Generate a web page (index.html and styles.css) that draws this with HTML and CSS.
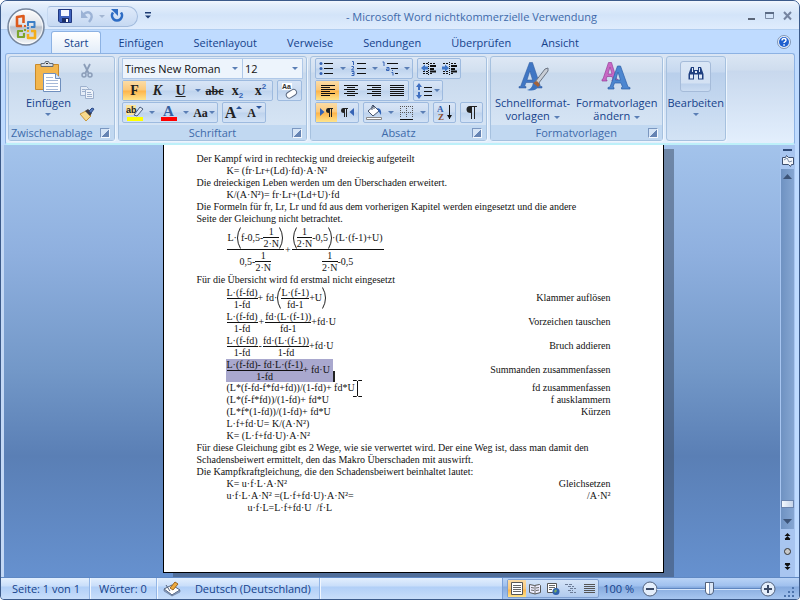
FILE: index.html
```html
<!DOCTYPE html>
<html lang="de">
<head>
    <meta charset="UTF-8">
    <meta name="viewport" content="width=device-width, initial-scale=1.0">
    <title>Microsoft Word nichtkommerzielle Verwendung</title>
    <link rel="stylesheet" href="styles.css">
</head>
<body>

<div class="window">
    <header class="titlebar">
        <button class="office-button" aria-label="Office">
            <svg width="40" height="40" viewBox="0 0 40 40">
                <defs>
                    <linearGradient id="orb" x1="0" y1="0" x2="0" y2="1">
                        <stop offset="0" stop-color="#fdfdfd"/>
                        <stop offset=".45" stop-color="#dfe3e9"/>
                        <stop offset=".5" stop-color="#b9c1cc"/>
                        <stop offset="1" stop-color="#f6f8fa"/>
                    </linearGradient>
                </defs>
                <circle cx="20" cy="20" r="18" fill="url(#orb)" stroke="#76869d" stroke-width="1.5"/>
                <circle cx="20" cy="20" r="16.5" fill="none" stroke="#fff" opacity=".7"/>
                <g fill="none" stroke-width="2.6" stroke-linejoin="round">
                    <path d="M16 19h-5v-9l6.500-1v7" stroke="#dd5a1c"/>
                    <path d="M22 19v-4h6.500v5h-3.500" stroke="#3d7fc6" stroke-width="2"/>
                    <path d="M17 24h-5v6h6v-4" stroke="#7ba52c" stroke-width="2.200"/>
                    <path d="M22 27v4h7v-7h-4" stroke="#f3ad1b"/>
                </g>
                <path d="M18 18h2v2h-2z" fill="#dd5a1c"/>
                <path d="M21 20h2v2h-2z" fill="#3d7fc6"/>
                <path d="M18 22h2v2h-2z" fill="#7ba52c"/>
                <path d="M21 23h2v2h-2z" fill="#f3ad1b"/>
            </svg>
        </button>
        <div class="quick-access">
            <button aria-label="Speichern">
                <svg width="16" height="16" viewBox="0 0 16 16">
                    <path d="M1.500 1.500h13v13h-11.500l-1.500-1.500z" fill="#3f62bd" stroke="#20377f"/>
                    <path d="M4 2h8v6h-8z" fill="#f4f8ff"/>
                    <path d="M5 10h7v4h-7z" fill="#1d2f66"/>
                    <path d="M9 11h2v3h-2z" fill="#fff"/>
                </svg>
            </button>
            <button aria-label="Rückgängig">
                <svg width="16" height="16" viewBox="0 0 16 16">
                    <path d="M4 7q4-4 7-2q4 3-1 9" fill="none" stroke="#9cb3d6" stroke-width="2.400"/>
                    <path d="M2 2v8h7z" fill="#9cb3d6"/>
                </svg>
            </button>
            <span class="caret faded"></span>
            <button aria-label="Wiederholen">
                <svg width="16" height="16" viewBox="0 0 16 16">
                    <path d="M4 4.500a5 5 0 1 0 8 0" fill="none" stroke="#2d6cc4" stroke-width="2.600"/>
                    <path d="M2 1h7v7z" fill="#2d6cc4"/>
                </svg>
            </button>
        </div>
        <button class="customize" aria-label="Symbolleiste anpassen">
            <svg width="8" height="8" viewBox="0 0 8 8"><path d="M1 0h6v1.500h-6zM1 3.500h6l-3 3z" fill="#1e3c74"/></svg>
        </button>
        <h1>- Microsoft Word nichtkommerzielle Verwendung</h1>
        <div class="window-buttons">
            <button aria-label="Minimieren"><svg width="10" height="10" viewBox="0 0 10 10"><path d="M1 7h7v2h-7z" fill="#5b6678"/></svg></button>
            <button aria-label="Maximieren"><svg width="10" height="10" viewBox="0 0 10 10"><path d="M.5 1.500h8v6h-8z" fill="none" stroke="#7b8ba5"/><path d="M0 1h9v2h-9z" fill="#5b6b85"/></svg></button>
            <button aria-label="Schließen"><svg width="10" height="10" viewBox="0 0 10 10"><path d="M1 1l7 7.500M8 1l-7 7.500" stroke="#7584a0" stroke-width="2"/></svg></button>
        </div>
    </header>

    <nav class="tabs">
        <button class="tab active">Start</button>
        <button class="tab">Einfügen</button>
        <button class="tab">Seitenlayout</button>
        <button class="tab">Verweise</button>
        <button class="tab">Sendungen</button>
        <button class="tab">Überprüfen</button>
        <button class="tab">Ansicht</button>
        <button class="help" aria-label="Hilfe">
            <svg width="14" height="14" viewBox="0 0 14 14">
                <circle cx="7" cy="7" r="6.500" fill="#e8f0fb" stroke="#7f95b5"/>
                <circle cx="7" cy="7" r="5" fill="#1e5fcf"/>
                <path d="M5 5.500q0-2 2-2t2 1.700q0 1-1.200 1.600q-.8.400-.8 1.200" fill="none" stroke="#fff" stroke-width="1.400"/>
                <path d="M6.300 9.200h1.500v1.500h-1.500z" fill="#fff"/>
            </svg>
        </button>
    </nav>

    <div class="ribbon">
        <section class="group clipboard">
            <div class="group-body">
                <button class="big">
                    <svg width="28" height="32" viewBox="0 0 28 32">
                        <path d="M1.500 3.500h23v25h-23z" fill="#f3b64d" stroke="#c98a2b"/>
                        <path d="M7 5.500v-3h3.500l1-2h3l1 2h3.500v3z" fill="#d9dde2" stroke="#5f6a78"/>
                        <path d="M12 2.500h2" stroke="#333"/>
                        <path d="M9.500 12.500h12l5 5v13h-17z" fill="#fff" stroke="#6f8fbd"/>
                        <path d="M21.500 12.500v5h5" fill="#d6e4f6" stroke="#6f8fbd"/>
                        <path d="M12 16.500h7M12 19.500h12M12 22.500h12M12 25.500h12M12 28.500h12" stroke="#a5b9d8"/>
                    </svg>
                    <span>Einfügen</span>
                    <span class="caret"></span>
                </button>
                <div class="small-tools">
                    <button aria-label="Ausschneiden">
                        <svg width="16" height="16" viewBox="0 0 16 16">
                            <path d="M5 1l4.500 9M11 1l-4.500 9" stroke="#8b9db8" stroke-width="1.800"/>
                            <circle cx="5" cy="12" r="2" fill="none" stroke="#8b9db8" stroke-width="1.500"/>
                            <circle cx="11" cy="12" r="2" fill="none" stroke="#8b9db8" stroke-width="1.500"/>
                        </svg>
                    </button>
                    <button aria-label="Kopieren">
                        <svg width="16" height="16" viewBox="0 0 16 16">
                            <path d="M1.500 2.500h6l2 2v7h-8z" fill="#e4ecf7" stroke="#9db0cd"/>
                            <path d="M6.500 5.500h6l2 2v7h-8z" fill="#eef3fa" stroke="#9db0cd"/>
                            <path d="M3 5.500h3M3 7.500h3M8 8.500h4M8 10.500h5M8 12.500h5" stroke="#9db0cd"/>
                        </svg>
                    </button>
                    <button aria-label="Format übertragen">
                        <svg width="16" height="16" viewBox="0 0 16 16">
                            <path d="M1 8l6-3 5 5-5 5z" fill="#f7d98c" stroke="#c9983b"/>
                            <path d="M6 5l3-2 4 4-2 3z" fill="#3d3d48"/>
                            <path d="M10 5l3-3 2 1-3 4z" fill="#5379bd" stroke="#2c4a86"/>
                        </svg>
                    </button>
                </div>
            </div>
            <footer>Zwischenablage<span class="launcher"></span></footer>
        </section>

        <section class="group font">
            <div class="group-body rows">
                <div class="row combos">
                    <label class="combo family"><select aria-label="Schriftart"><option>Times New Roman</option></select></label>
                    <label class="combo size"><select aria-label="Schriftgrad"><option>12</option></select></label>
                </div>
                <div class="row">
                    <div class="tools">
                        <button class="tool wide glyph on"><b>F</b></button>
                        <button class="tool wide glyph"><b><i>K</i></b></button>
                        <button class="tool wide glyph"><b><u>U</u></b></button>
                        <button class="drop" aria-label="Unterstreichungsart"><span class="caret"></span></button>
                        <button class="tool wide glyph strike"><s>abc</s></button>
                        <button class="tool wide glyph"><b>x</b><sub>2</sub></button>
                        <button class="tool wide glyph"><b>x</b><sup>2</sup></button>
                    </div>
                    <div class="tools">
                        <button class="tool wide" aria-label="Formatierung löschen">
                            <svg width="18" height="18" viewBox="0 0 18 18">
                                <path d="M1 1h10v7h-10z" fill="#fff"/>
                                <text x="1" y="7" class="tiny">Aa</text>
                                <rect x="5" y="9" width="11" height="6" rx="3" transform="rotate(-32 10 12)" fill="#fff" stroke="#5d6b82"/>
                            </svg>
                        </button>
                    </div>
                </div>
                <div class="row">
                    <div class="tools">
                        <button class="tool wide" aria-label="Texthervorhebungsfarbe">
                            <svg width="18" height="17" viewBox="0 0 18 17">
                                <path d="M0 1h10v10h-10z" fill="#fbe49a"/>
                                <text x="0" y="9" class="mini">ab</text>
                                <path d="M8 11l6-8 3 2-6 7z" fill="#dfe8f4" stroke="#4c5e7c"/>
                                <path d="M1 13h16v4h-16z" fill="#ff0"/>
                            </svg>
                        </button>
                        <button class="drop" aria-label="Hervorhebung wählen"><span class="caret"></span></button>
                        <button class="tool wide" aria-label="Schriftfarbe">
                            <svg width="18" height="17" viewBox="0 0 18 17">
                                <text x="3" y="12" class="font-color">A</text>
                                <path d="M1 13h16v4h-16z" fill="#f00"/>
                            </svg>
                        </button>
                        <button class="drop" aria-label="Farbe wählen"><span class="caret"></span></button>
                        <button class="tool case glyph">Aa<span class="caret"></span></button>
                    </div>
                    <div class="tools">
                        <button class="tool glyph grow">A<span class="up"></span></button>
                        <button class="tool glyph shrink">A<span class="caret dark"></span></button>
                    </div>
                </div>
            </div>
            <footer>Schriftart<span class="launcher"></span></footer>
        </section>

        <section class="group paragraph">
            <div class="group-body rows">
                <div class="row">
                    <div class="tools">
                        <button class="tool" aria-label="Aufzählungszeichen">
                            <svg width="15" height="15" viewBox="0 0 15 15">
                                <path d="M5 2.500h9M5 7.500h9M5 12.500h9" stroke="#111"/>
                                <g fill="#3563b5"><circle cx="2" cy="2.500" r="1.500"/><circle cx="2" cy="7.500" r="1.500"/><circle cx="2" cy="12.500" r="1.500"/></g>
                            </svg>
                        </button>
                        <button class="drop" aria-label="Aufzählung wählen"><span class="caret"></span></button>
                        <button class="tool" aria-label="Nummerierung">
                            <svg width="15" height="15" viewBox="0 0 15 15">
                                <path d="M6 2.500h9M6 7.500h9M6 12.500h9" stroke="#111"/>
                                <path d="M1 .5h1.500v3.500M.5 5.500h2v1.500l-2 2h2.500M.5 10.500h2.500v4h-2.500M1 12.500h2" fill="none" stroke="#3563b5"/>
                            </svg>
                        </button>
                        <button class="drop" aria-label="Nummerierung wählen"><span class="caret"></span></button>
                        <button class="tool" aria-label="Liste mit mehreren Ebenen">
                            <svg width="17" height="15" viewBox="0 0 17 15">
                                <path d="M5 2.500h11M9 7.500h7M13 12.500h3" stroke="#111"/>
                                <path d="M.5 1h1.500v4M4.500 6.500h2.500v3h-2.500v-1.500h2M10.500 9v1M9.500 11.500h1.500v3" fill="none" stroke="#3563b5"/>
                            </svg>
                        </button>
                        <button class="drop" aria-label="Liste wählen"><span class="caret"></span></button>
                    </div>
                    <div class="tools">
                        <button class="tool" aria-label="Einzug verkleinern">
                            <svg width="16" height="16" viewBox="0 0 16 16">
                                <path d="M2 2.500h5M9 2.500h6M9 12.500h3M2 12.500h5M2 10.500h5" stroke="#111" stroke-dasharray="2 1"/>
                                <path d="M9 5h6M9 8h4M9 10.500h6" stroke="#111" stroke-width="2"/>
                                <path d="M7.500 1v14" stroke="#111" stroke-dasharray="1 1"/>
                                <path d="M0 7l4-3.500v2h3v3h-3v2z" fill="#3f76c8"/>
                            </svg>
                        </button>
                        <button class="tool" aria-label="Einzug vergrößern">
                            <svg width="16" height="16" viewBox="0 0 16 16">
                                <path d="M1 2.500h6M9 2.500h6M9 12.500h3M1 12.500h6M1 10.500h6" stroke="#111" stroke-dasharray="2 1"/>
                                <path d="M9 5h6M9 8h4M9 10.500h6" stroke="#111" stroke-width="2"/>
                                <path d="M7.500 1v14" stroke="#111" stroke-dasharray="1 1"/>
                                <path d="M7 7l-4-3.500v2h-3v3h3v2z" fill="#3f76c8"/>
                            </svg>
                        </button>
                    </div>
                </div>
                <div class="row">
                    <div class="tools">
                        <button class="tool wide on" aria-label="Linksbündig"><svg width="14" height="11" viewBox="0 0 14 11"><path d="M0 .5h14M0 2.500h9M0 4.500h14M0 6.500h9M0 8.500h14M0 10.500h9" stroke="#111"/></svg></button>
                        <button class="tool wide" aria-label="Zentriert"><svg width="14" height="11" viewBox="0 0 14 11"><path d="M0 .5h14M3 2.500h8M0 4.500h14M3 6.500h8M0 8.500h14M3 10.500h8" stroke="#111"/></svg></button>
                        <button class="tool wide" aria-label="Rechtsbündig"><svg width="14" height="11" viewBox="0 0 14 11"><path d="M0 .5h14M5 2.500h9M0 4.500h14M5 6.500h9M0 8.500h14M5 10.500h9" stroke="#111"/></svg></button>
                        <button class="tool wide" aria-label="Blocksatz"><svg width="14" height="11" viewBox="0 0 14 11"><path d="M0 .5h14M0 2.500h14M0 4.500h14M0 6.500h14M0 8.500h14M0 10.500h14" stroke="#111"/></svg></button>
                    </div>
                    <div class="tools">
                        <button class="tool spacing" aria-label="Zeilenabstand">
                            <svg width="16" height="16" viewBox="0 0 16 16">
                                <path d="M3 0l3 4h-2v3h-2v-3h-2zM3 16l3-4h-2v-3h-2v3h-2z" fill="#3f6fc0"/>
                                <path d="M8 4.500h8M8 8.500h8M8 12.500h8" stroke="#111"/>
                            </svg>
                            <span class="caret"></span>
                        </button>
                    </div>
                </div>
                <div class="row">
                    <div class="tools">
                        <button class="tool on" aria-label="Von links nach rechts">
                            <svg width="13" height="9" viewBox="0 0 13 9"><path d="M0 0l4.500 4-4.500 4z" fill="#3563b5"/><path d="M8 0h5v1h-1v8h-1v-8h-1v8h-1v-4q-3 0-3-2.500t2-2.500z" fill="#222"/></svg>
                        </button>
                        <button class="tool" aria-label="Von rechts nach links">
                            <svg width="13" height="9" viewBox="0 0 13 9"><path d="M13 0l-4.500 4 4.500 4z" fill="#3563b5"/><path d="M2 0h5v1h-1v8h-1v-8h-1v8h-1v-4q-3 0-3-2.500t2-2.500z" fill="#222"/></svg>
                        </button>
                    </div>
                    <div class="tools">
                        <button class="tool" aria-label="Schattierung">
                            <svg width="17" height="17" viewBox="0 0 17 17">
                                <path d="M2 7l6-5 5 5-6 5z" fill="#fff" stroke="#44526a"/>
                                <path d="M6 6v-4q1-2 2 0v3" fill="none" stroke="#44526a"/>
                                <path d="M11 4q5 0 4 7l-2-3z" fill="#2e62b5"/>
                                <path d="M.5 13.500h15v2h-15z" fill="#fff" stroke="#888"/>
                            </svg>
                        </button>
                        <button class="drop" aria-label="Schattierung wählen"><span class="caret"></span></button>
                        <button class="tool" aria-label="Rahmenlinie">
                            <svg width="13" height="14" viewBox="0 0 13 14">
                                <path d="M0 .5h13M0 6.500h13M.5 0v12M6.500 0v12M12.500 0v12" stroke="#555" stroke-dasharray="1 1"/>
                                <path d="M0 13.500h13" stroke="#111"/>
                            </svg>
                        </button>
                        <button class="drop" aria-label="Rahmen wählen"><span class="caret"></span></button>
                    </div>
                    <div class="tools">
                        <button class="tool" aria-label="Sortieren">
                            <svg width="16" height="17" viewBox="0 0 16 17">
                                <text x="0" y="8" class="sort-a">A</text>
                                <text x="1" y="16" class="sort-z">Z</text>
                                <path d="M12.500 1v14" stroke="#111"/>
                                <path d="M10 11h5l-2.500 4z" fill="#111"/>
                            </svg>
                        </button>
                    </div>
                    <div class="tools">
                        <button class="tool" aria-label="Alle anzeigen">
                            <svg width="11" height="13" viewBox="0 0 11 13"><path d="M4 0h7v1h-2v12h-1v-12h-2v12h-1v-6q-4.500 0-4.500-3.500t3.500-3.500z" fill="#222"/></svg>
                        </button>
                    </div>
                </div>
            </div>
            <footer>Absatz<span class="launcher"></span></footer>
        </section>

        <section class="group styles">
            <div class="group-body">
                <button class="big">
                    <svg width="32" height="32" viewBox="0 0 32 32">
                        <path d="M2 27h7v-1.500h-1.500l1.500-4h7l1.500 4h-1.500v1.500h9v-1.500h-1.500l-8-24h-3l-9 24h-1.500zM10 19l2.800-9 2.800 9z" fill="#3f76c4" stroke="#2c5799" stroke-width=".5"/>
                        <path d="M18 21l10-13 3-1v3l-10 13z" fill="#c9ced6" stroke="#6b7482"/>
                        <path d="M16 22l4-2 3 4-3 3z" fill="#a3623a"/>
                        <path d="M10 29q5-1 6-7l5 4q-3 5-11 3z" fill="#3b72bd"/>
                    </svg>
                    <span>Schnellformat-<br>vorlagen <i class="caret"></i></span>
                </button>
                <button class="big">
                    <svg width="32" height="32" viewBox="0 0 32 32">
                        <path d="M1 20h5v-1l-1-.5 1-3h5l1 3-1 .5v1h6v-1.500l-1.500-.5-5-16.500h-3l-5.500 16.500-1 .5zM7 13l2-7 2 7z" fill="#c868c4" stroke="#96429a" stroke-width=".7"/>
                        <path d="M7 28h6v-1.500l-1-.5 1.500-4h6.500l1.500 4-1 .5v1.500h8.500v-1.500l-2-.5-7.500-21h-3l-7.500 21-2 .5zM14.500 19l2.500-8 2.500 8z" fill="#4c86d0" stroke="#2c5fa8" stroke-width=".7"/>
                    </svg>
                    <span>Formatvorlagen<br>ändern <i class="caret"></i></span>
                </button>
            </div>
            <footer>Formatvorlagen<span class="launcher"></span></footer>
        </section>

        <section class="group editing">
            <button class="big">
                <span class="tile">
                    <svg width="16" height="14" viewBox="0 0 16 14">
                        <path d="M3 1h3v3h4v-3h3l2.500 7v5.500h-5.500v-5h-4v5h-5.500v-5.500z" fill="#1f3f80"/>
                        <path d="M2 8.500h3v4h-3zM11 8.500h3v4h-3zM4 2h1v4h-1zM11 2h1v4h-1zM7 5h2v2h-2z" fill="#dfe9f8"/>
                    </svg>
                </span>
                <span>Bearbeiten</span>
                <span class="caret"></span>
            </button>
        </section>
    </div>

    <div class="workspace">
        <main class="desk">
            <article class="page">
                <p>Der Kampf wird in rechteckig und dreieckig aufgeteilt</p>
                <p class="indent">K= (fr·Lr+(Ld)·fd)·A·N²</p>
                <p>Die dreieckigen Leben werden um den Überschaden erweitert.</p>
                <p class="indent">K/(A·N²)= fr·Lr+(Ld+U)·fd</p>
                <p>Die Formeln für fr, Lr, Lr und fd aus dem vorherigen Kapitel werden eingesetzt und die andere<br>Seite der Gleichung nicht betrachtet.</p>
                <div class="equation tall">
                    <span class="frac">
                        <span class="term">L·<svg class="paren" viewBox="0 0 4 22"><path d="M3.500 .5q-6 10.500 0 21"/></svg>f-0,5-<span class="frac"><span>1</span><span>2·N</span></span><svg class="paren" viewBox="0 0 4 22"><path d="M.5 .5q6 10.500 0 21"/></svg></span>
                        <span class="term">0,5-<span class="frac"><span>1</span><span>2·N</span></span></span>
                    </span>
                    <span class="operator">+</span>
                    <span class="frac">
                        <span class="term"><svg class="paren" viewBox="0 0 4 22"><path d="M3.500 .5q-6 10.500 0 21"/></svg><span class="frac"><span>1</span><span>2·N</span></span>-0,5<svg class="paren" viewBox="0 0 4 22"><path d="M.5 .5q6 10.500 0 21"/></svg>·(L·(f-1)+U)</span>
                        <span class="term"><span class="frac"><span>1</span><span>2·N</span></span>-0,5</span>
                    </span>
                </div>
                <p>Für die Übersicht wird fd erstmal nicht eingesetzt</p>
                <div class="equation">
                    <span class="frac"><span>L·(f-fd)</span><span>1-fd</span></span>
                    <span>+ fd·</span>
                    <svg class="paren" viewBox="0 0 4 22"><path d="M3.500 .5q-6 10.500 0 21"/></svg>
                    <span class="frac"><span>L·(f-1)</span><span>fd-1</span></span>
                    <span>+U</span>
                    <svg class="paren" viewBox="0 0 4 22"><path d="M.5 .5q6 10.500 0 21"/></svg>
                    <span class="note">Klammer auflösen</span>
                </div>
                <div class="equation">
                    <span class="frac"><span>L·(f-fd)</span><span>1-fd</span></span>
                    <span class="operator">+</span>
                    <span class="frac"><span>fd·(L·(f-1))</span><span>fd-1</span></span>
                    <span>+fd·U</span>
                    <span class="note">Vorzeichen tauschen</span>
                </div>
                <div class="equation">
                    <span class="frac"><span>L·(f-fd)</span><span>1-fd</span></span>
                    <span class="operator">-</span>
                    <span class="frac"><span>fd·(L·(f-1))</span><span>1-fd</span></span>
                    <span>+fd·U</span>
                    <span class="note">Bruch addieren</span>
                </div>
                <div class="equation">
                    <span class="selected"><span class="frac"><span>L·(f-fd)- fd·L·(f-1)</span><span>1-fd</span></span>+ fd·U</span>
                    <span class="text-caret"></span>
                    <span class="note">Summanden zusammenfassen</span>
                </div>
                <p class="indent split"><span class="pointer-line">(L*(f-fd-f*fd+fd))/(1-fd)+ fd*U<svg class="pointer" width="9" height="17" viewBox="0 0 9 17"><path d="M0 .5h3.500l1 1 1-1h3.500M0 16.500h3.500l1-1 1 1h3.500M4.500 1v15" fill="none" stroke="#111"/></svg></span><span>fd zusammenfassen</span></p>
                <p class="indent split"><span>(L*(f-f*fd))/(1-fd)+ fd*U</span><span>f ausklammern</span></p>
                <p class="indent split"><span>(L*f*(1-fd))/(1-fd)+ fd*U</span><span>Kürzen</span></p>
                <p class="indent">L·f+fd·U= K/(A·N²)</p>
                <p class="indent">K= (L·f+fd·U)·A·N²</p>
                <p>Für diese Gleichung gibt es 2 Wege, wie sie verwertet wird. Der eine Weg ist, dass man damit den<br>Schadensbeiwert ermittelt, den das Makro Überschaden mit auswirft.</p>
                <p>Die Kampfkraftgleichung, die den Schadensbeiwert beinhaltet lautet:</p>
                <p class="indent split"><span>K= u·f·L·A·N²</span><span>Gleichsetzen</span></p>
                <p class="indent split"><span>u·f·L·A·N² =(L·f+fd·U)·A·N²=</span><span>/A·N²</span></p>
                <p class="indent deeper">u·f·L=L·f+fd·U&nbsp; /f·L</p>
            </article>
        </main>
        <aside class="scroll-column">
            <span class="splitter"></span>
            <button class="ruler-toggle" aria-label="Lineal">
                <svg width="12" height="12" viewBox="0 0 12 12"><path d="M.5 2.500h3l1-2 2 2h5v7h-2l-1 2-2-2h-6z" fill="#f2f5fa" stroke="#3d4f70"/><path d="M2 5l3-2 2 4 3-1" fill="none" stroke="#8090aa"/></svg>
            </button>
            <div class="track">
                <button aria-label="Nach oben"><svg width="9" height="5" viewBox="0 0 9 5"><path d="M4.500 0l4.500 5h-9z" fill="#3d5478"/></svg></button>
                <span class="thumb"></span>
                <button aria-label="Nach unten"><svg width="9" height="5" viewBox="0 0 9 5"><path d="M0 0h9l-4.500 5z" fill="#3d5478"/></svg></button>
            </div>
            <button class="browse" aria-label="Vorherige Seite"><svg width="7" height="7" viewBox="0 0 7 7"><path d="M3.500 0l3 3h-6zM3.500 3l3 3h-6zM1 6h5v1h-5z" fill="#111"/></svg></button>
            <button class="browse" aria-label="Browseobjekt"><svg width="7" height="7" viewBox="0 0 7 7"><circle cx="3.500" cy="3.500" r="3" fill="#c9c9c9" stroke="#333"/></svg></button>
            <button class="browse" aria-label="Nächste Seite"><svg width="7" height="7" viewBox="0 0 7 7"><path d="M3.500 7l3-3h-6zM3.500 4l3-3h-6zM1 0h5v1h-5z" fill="#111"/></svg></button>
        </aside>
    </div>

    <footer class="statusbar">
        <span class="cell">Seite: 1 von 1</span>
        <span class="cell">Wörter: 0</span>
        <span class="cell proof">
            <svg width="18" height="16" viewBox="0 0 18 16">
                <path d="M1 8l8-4 8 5-8 5z" fill="#fff" stroke="#51617c"/>
                <path d="M1 8v2l8 5 8-4v-2l-8 5z" fill="#8ea3c6" stroke="#51617c" stroke-width=".5"/>
                <path d="M3 4l4 6" stroke="#51617c"/>
                <path d="M7 7l5-6 3 2-5 6z" fill="#edaa3e" stroke="#9a6420"/>
            </svg>
            Deutsch (Deutschland)
        </span>
        <div class="view-zone">
            <div class="views">
                <button class="on" aria-label="Seitenlayout"><svg width="12" height="13" viewBox="0 0 12 13"><path d="M.5 .5h11v12h-11z" fill="#fff" stroke="#555"/><path d="M2 3.500h8M2 5.500h8M2 7.500h8M2 9.500h8" stroke="#666"/></svg></button>
                <button aria-label="Vollbild-Lesemodus"><svg width="12" height="12" viewBox="0 0 12 12"><path d="M.5 1.500l5 1 5-1 1 1v7l-5.500 1.500-5.500-1.500z" fill="#eef" stroke="#555"/><path d="M6 2v9M2 4.500l3 .5M2 7l3 .5M7 5l3-.5M7 7.500l3-.5" stroke="#666"/></svg></button>
                <button aria-label="Weblayout"><svg width="13" height="12" viewBox="0 0 13 12"><path d="M.5 .5h9v9h-9z" fill="#fff" stroke="#555"/><path d="M2 2.500h6M2 4.500h6M2 6.500h3" stroke="#666"/><circle cx="9" cy="8.500" r="3.500" fill="#2f61ad"/><path d="M7 8l2-2 1 2-2 2z" fill="#79ad62"/></svg></button>
                <button aria-label="Gliederung"><svg width="12" height="12" viewBox="0 0 12 12"><path d="M0 1.500h7M3 3.500h6M5 5.500h6M3 7.500h5M5 9.500h6" stroke="#6b7b96" stroke-dasharray="3 1"/></svg></button>
                <button aria-label="Entwurf"><svg width="11" height="12" viewBox="0 0 11 12"><path d="M0 1.500h11M0 3.500h11M0 5.500h11M0 7.500h11M0 9.500h11" stroke="#555"/></svg></button>
            </div>
            <span class="percent">100 %</span>
            <button class="zoom-step" aria-label="Verkleinern"><svg width="16" height="16" viewBox="0 0 16 16"><circle cx="8" cy="8" r="7" fill="#e4eefb" stroke="#51617c"/><path d="M4 8h8" stroke="#3b4a66" stroke-width="2"/></svg></button>
            <input type="range" min="0" max="100" value="50" aria-label="Zoom">
            <button class="zoom-step" aria-label="Vergrößern"><svg width="16" height="16" viewBox="0 0 16 16"><circle cx="8" cy="8" r="7" fill="#e4eefb" stroke="#51617c"/><path d="M4 8h8M8 4v8" stroke="#3b4a66" stroke-width="2"/></svg></button>
            <svg class="grip" width="11" height="11" viewBox="0 0 11 11"><path d="M8 0h2v2h-2zM4 4h2v2h-2zM8 4h2v2h-2zM0 8h2v2h-2zM4 8h2v2h-2zM8 8h2v2h-2z" fill="#4d74ad"/></svg>
        </div>
    </footer>
</div>

</body>
</html>
```
FILE: styles.css
```css
* {
    box-sizing: border-box;
}
body {
    margin: 0;
    background-color: #fff;
    font-family: "Open Sans", "Noto Sans", sans-serif;
    font-size: 11px;
    color: #15428b;
}
button {
    display: flex;
    justify-content: center;
    align-items: center;
    padding: 0;
    border: none;
    background: none;
    font: inherit;
    color: inherit;
}
svg {
    display: block;
    flex: none;
}
.window {
    position: relative;
    display: flex;
    flex-direction: column;
    height: 100vh;
    border: 1px solid #3b5a8a;
    border-radius: 7px 7px 4px 4px;
    background-color: #bfdbff;
    overflow: hidden;
}

/* title bar */
.titlebar {
    display: flex;
    align-items: center;
    height: 29px;
    padding: 2px 6px 0 46px;
    border-bottom: 1px solid #b0cdf0;
    background: linear-gradient(#f2f7fe 0, #e3eefb 4px, #d3e4f9 14px, #dfecfd 100%);
}
.office-button {
    position: absolute;
    top: 6px;
    left: 5px;
}
.quick-access {
    display: flex;
    align-items: center;
    gap: 6px;
    height: 21px;
    width: 91px;
    padding-left: 9px;
    border: 1px solid #a2bbdd;
    border-left-color: #c5d8f0;
    border-radius: 4px 11px 11px 4px;
    background: linear-gradient(#dfeafa, #c6d9f2);
}
.customize {
    margin-left: 6px;
}
h1 {
    flex: 1;
    margin: 0;
    padding: 0 34px 0 78px;
    font-size: 11px;
    font-weight: normal;
    text-align: center;
    color: #3e6aaa;
    white-space: nowrap;
}
.window-buttons {
    display: flex;
    gap: 8px;
}
.caret {
    display: inline-block;
    border: 3px solid transparent;
    border-top-color: #5a7eb5;
    border-bottom: none;
}
.caret.faded {
    margin: 0 -2px;
    border-top-color: #a3b6d2;
}

/* tabs */
.tabs {
    display: flex;
    align-items: stretch;
    height: 23px;
    padding: 1px 8px 0 48px;
}
.tab {
    margin: 0 2px;
    padding: 0 12px;
    border: 1px solid transparent;
    border-bottom: none;
}
.tab.active {
    border-color: #8db2e3;
    border-radius: 3px 3px 0 0;
    background: linear-gradient(#fff, #e3edf9);
}
.help {
    margin-left: auto;
}

/* ribbon */
.ribbon {
    display: flex;
    gap: 3px;
    margin: 0 4px;
    padding: 2px;
    border: 1px solid #8db2e3;
    border-bottom: 2px solid #bdf0f9;
    border-radius: 3px;
    background: linear-gradient(#dbe6f4 0, #cfddee 16px, #c8d8ed 17px, #e3effd 100%);
}
.group {
    display: flex;
    flex-direction: column;
    height: 85px;
    border: 1px solid #a6c1df;
    border-radius: 3px;
    background: linear-gradient(#dee8f5 0, #d1dfef 15px, #c8d9ed 16px, #d9e7f6 100%);
    box-shadow: 1px 1px 0 #edf5fd;
}
.group footer {
    display: flex;
    justify-content: center;
    align-items: center;
    height: 15px;
    padding: 0 4px;
    background-color: #c1d8f1;
    color: #3e6aaa;
    line-height: 15px;
}
.group footer::before {
    content: "";
    flex: 1;
}
.launcher {
    flex: 1;
    display: flex;
    justify-content: flex-end;
}
.launcher::after {
    content: "";
    width: 8px;
    height: 8px;
    border: 1px solid #7b97c0;
    border-right-color: #f4f8fd;
    border-bottom-color: #f4f8fd;
    background: linear-gradient(135deg, #d5e4f6 50%, #6684b3 51%);
}
.clipboard footer::before {
    display: none;
}
.clipboard footer {
    justify-content: space-between;
    padding-left: 2px;
}
.group-body {
    flex: 1;
    display: flex;
    padding: 0 4px;
}
.rows {
    flex-direction: column;
    gap: 1px;
    padding-top: 1px;
}
.font .rows {
    padding: 1px 3px 0;
}
.paragraph .rows {
    padding: 1px 3px 0 4px;
}
.row {
    display: flex;
    gap: 4px;
}
.clipboard {
    width: 107px;
}
.clipboard .group-body {
    justify-content: space-between;
    padding: 0 19px 0 17px;
}
.big {
    flex-direction: column;
    justify-content: flex-start;
    padding-top: 4px;
    line-height: 13px;
}
.big svg {
    margin-bottom: 3px;
}
.big > .caret {
    margin-top: 4px;
}
.big i.caret {
    vertical-align: middle;
    margin-left: 1px;
}
.styles .group-body {
    gap: 6px;
}
.small-tools {
    display: flex;
    flex-direction: column;
    justify-content: space-around;
    padding-top: 3px;
}
.editing {
    background: linear-gradient(#d5e3f4 0, #c6d8ef 15px, #b9cfeb 16px, #d3e3f5 100%);
}
.editing .big {
    padding: 4px 1px 0;
}
.tile {
    display: flex;
    justify-content: center;
    width: 31px;
    height: 31px;
    margin-bottom: 4px;
    padding-top: 4px;
    border: 1px solid #a5bbd9;
    border-radius: 3px;
    background: linear-gradient(#dbe7f6 0, #d3e1f3 21px, #bcd1ec 22px, #cbdcf2 100%);
}

/* ribbon tools */
.combos {
    gap: 0;
}
.combo {
    position: relative;
    height: 21px;
    border: 1px solid #afc8e8;
    background-color: #edf4fc;
}
.combo::after {
    content: "";
    position: absolute;
    top: 8px;
    right: 4px;
    border: 3px solid transparent;
    border-top-color: #5a7eb5;
    border-bottom: none;
    pointer-events: none;
}
.combo select {
    width: 100%;
    height: 19px;
    padding: 0 2px;
    border: none;
    appearance: none;
    background: none;
    font: inherit;
    color: #111;
}
.family {
    width: 121px;
}
.size {
    width: 61px;
    margin-left: -1px;
}
.tools {
    display: flex;
    height: 21px;
    border: 1px solid #9dbadf;
    border-radius: 2px;
    background: linear-gradient(#d8e5f6 0, #ccdcf1 9px, #bed3ed 10px, #d2e2f6 100%);
}
.tool {
    width: 21px;
}
.tool.wide {
    width: 23px;
}
.drop {
    width: 11px;
}
.on {
    background: linear-gradient(#fbdca6 0, #fbc879 9px, #fdb44a 10px, #fee48c 100%);
}
.glyph {
    font-family: "Liberation Serif", serif;
    font-size: 14px;
    line-height: 14px;
    color: #222;
}
.glyph sub,
.glyph sup {
    font: bold 8px/8px "Liberation Sans", sans-serif;
    color: #3563b5;
}
.glyph sub {
    align-self: flex-end;
}
.glyph sup {
    align-self: flex-start;
    margin-top: 2px;
}
.strike {
    font-size: 12px;
    font-weight: bold;
}
.tool.case {
    width: 26px;
    gap: 1px;
    font-size: 12px;
    font-weight: bold;
}
.grow {
    font-size: 16px;
    font-weight: bold;
}
.shrink {
    font-size: 12px;
    font-weight: bold;
}
.up {
    align-self: flex-start;
    margin-top: 3px;
    border: 3px solid transparent;
    border-bottom-color: #2c569c;
    border-top: none;
}
.caret.dark {
    align-self: flex-start;
    margin-top: 3px;
    border-top-color: #2c569c;
}
.tool.spacing {
    width: 28px;
    gap: 2px;
}
.tiny {
    font: bold 7px "Liberation Sans", sans-serif;
    fill: #333;
}
.mini {
    font: bold 9px "Liberation Sans", sans-serif;
    fill: #222;
}
.font-color {
    font: bold 15px "Liberation Serif", serif;
    fill: #35609f;
}
.sort-a,
.sort-z {
    font: bold 9px "Liberation Serif", serif;
    fill: #2f5ca8;
}
.sort-z {
    fill: #8b4a2b;
}

/* document area */
.workspace {
    flex: 1;
    display: flex;
    min-height: 0;
    margin: 0 4px 0 0;
    border-left: 3px solid #c3d8f5;
}
.desk {
    flex: 1;
    display: flex;
    justify-content: center;
    padding: 0 0 4px 42px;
    background: linear-gradient(#a3c3eb 0, #8fb0df 25%, #7398c8 52%, #5a7fb5 72%, #6691cf 100%);
    overflow: hidden;
}
.page {
    width: 501px;
    padding: 8px 52px 0 33px;
    border: 1px solid #000;
    border-top: none;
    background-color: #fff;
    box-shadow: 10px 4px 0 rgba(60, 75, 100, 0.5);
    font-family: "Liberation Serif", serif;
    font-size: 10px;
    line-height: 12px;
    color: #111;
    white-space: nowrap;
}
.page p {
    margin: 0;
}
.page .indent {
    padding-left: 30px;
}
.page .deeper {
    padding-left: 51px;
}
.split {
    display: flex;
    justify-content: space-between;
}
.equation {
    display: flex;
    align-items: center;
    height: 24px;
    padding-left: 30px;
}
.equation.tall {
    height: 49px;
}
.frac {
    display: inline-flex;
    flex-direction: column;
    align-items: stretch;
    text-align: center;
    line-height: 11px;
}
.frac > :first-child {
    border-bottom: 1px solid #111;
}
.term {
    display: flex;
    justify-content: center;
    align-items: center;
    padding: 0 1px;
}
.operator {
    margin: 0 1px;
}
.paren {
    width: 4px;
    height: 22px;
    fill: none;
    stroke: #222;
    stroke-width: 1;
}
.note {
    margin-left: auto;
}
.selected {
    display: flex;
    align-items: center;
    margin-left: -1px;
    padding: 0 3px 0 1px;
    background-color: #a9a8ce;
}
.text-caret {
    align-self: flex-end;
    width: 2px;
    height: 11px;
    background-color: #222;
}
.pointer-line {
    position: relative;
}
.pointer {
    position: absolute;
    top: -2px;
    right: -7px;
}

/* scrollbar */
.scroll-column {
    display: flex;
    flex-direction: column;
    align-items: center;
    width: 15px;
    padding: 4px 0 3px;
    background-color: #a8c5f0;
}
.splitter {
    width: 9px;
    height: 2px;
    background-color: #2f4a78;
}
.ruler-toggle {
    margin: 4px 0 2px;
}
.track {
    flex: 1;
    display: flex;
    flex-direction: column;
    align-items: center;
    width: 13px;
    padding: 5px 0;
    background: linear-gradient(90deg, #6f92c2, #86a6d2);
}
.thumb {
    width: 13px;
    height: 8px;
    margin: auto 0 11px;
    border: 1px solid #6b84ad;
    background: linear-gradient(90deg, #f4f8fd, #c5d4ea);
}
.browse {
    height: 15px;
}

/* status bar */
.statusbar {
    display: flex;
    height: 22px;
    border-top: 1px solid #6089c4;
    background: linear-gradient(#e3effe 0, #c9defa 8px, #b1cff7 9px, #c8defa 100%);
    line-height: 20px;
}
.cell {
    display: flex;
    align-items: center;
    padding: 0 9px;
    border-right: 1px solid #93b6e6;
    box-shadow: 1px 0 0 #f0f6fe;
}
.cell:first-child {
    padding-left: 11px;
}
.proof {
    gap: 14px;
    padding: 0 8px 0 6px;
}
.view-zone {
    display: flex;
    align-items: center;
    margin-left: auto;
    padding: 0 4px;
    border-left: 1px solid #7ba0d8;
    background: linear-gradient(#b9d3f6 0, #9fc0ee 8px, #86abdf 9px, #a7c6f0 100%);
}
.views {
    display: flex;
    border: 1px solid #7f9fd0;
    border-radius: 2px;
    background: linear-gradient(#d5e4f8, #b1cbee);
}
.views button {
    width: 18px;
    height: 17px;
}
.percent {
    margin: 0 8px 0 4px;
}
.view-zone input {
    width: 104px;
    height: 16px;
    margin: 0 -1px;
    appearance: none;
    background: linear-gradient(transparent 7px, #5f86c0 7px, #5f86c0 8px, #d5e5fa 8px, #d5e5fa 9px, transparent 9px);
}
.view-zone input::-webkit-slider-thumb {
    appearance: none;
    width: 9px;
    height: 13px;
    border: 1px solid #51617c;
    border-radius: 1px 1px 5px 5px;
    background: linear-gradient(90deg, #fff, #fff 3px, #7e97bf 3px, #7e97bf 4px, #dbe6f5 4px);
}
.grip {
    margin: 8px 0 0 8px;
}
```
